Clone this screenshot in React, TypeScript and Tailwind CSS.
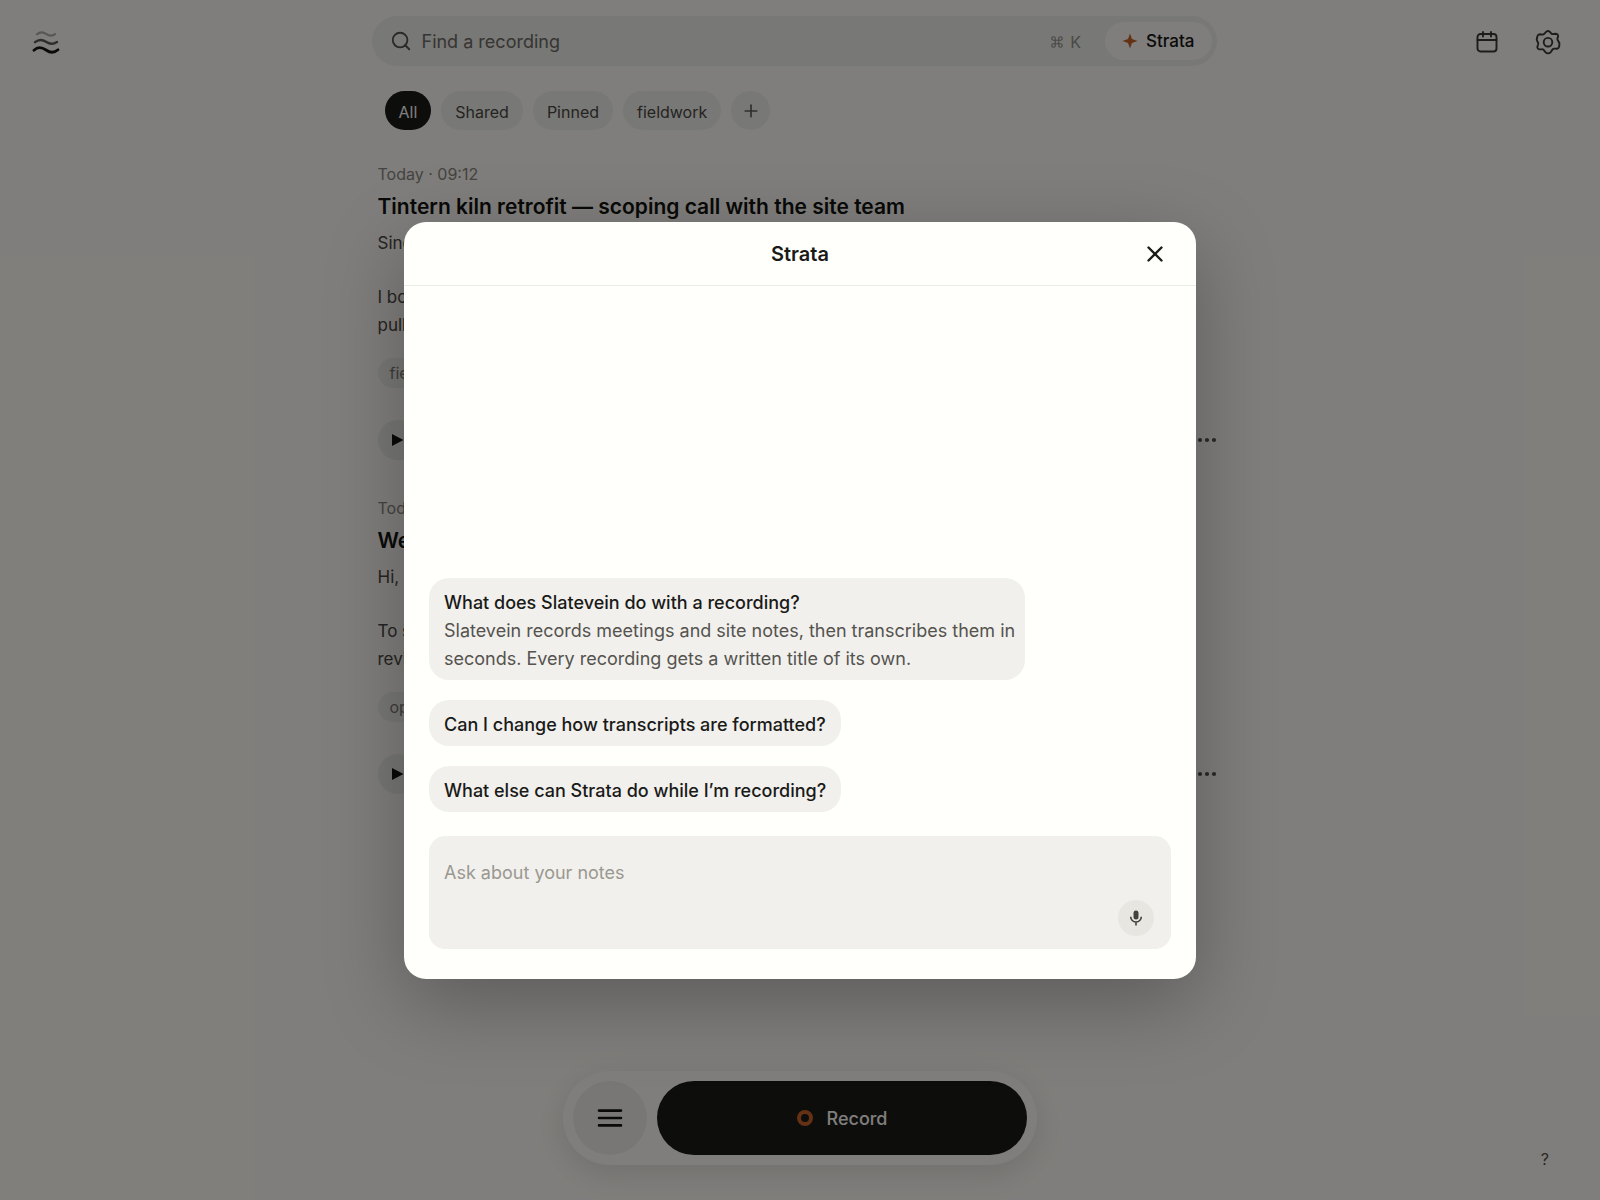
import { Command, Plus, Search, X } from "lucide-react";

const filters = [
    { key: 1, title: "All" },
    { key: 2, title: "Shared" },
    { key: 3, title: "Pinned" },
    { key: 4, title: "fieldwork" },
];

const recordings = [
    {
        key: 1,
        time: "Today · 09:12",
        title: "Tintern kiln retrofit — scoping call with the site team",
        intro: "Sinc",
        lines: ["I bo", "pull"],
        tag: "fie",
    },
    { key: 2, time: "Tod", title: "We", intro: "Hi,", lines: ["To s", "revi"], tag: "op" },
];

const suggestions = [
    {
        key: 1,
        title: "What does Slatevein do with a recording?",
        desc: "Slatevein records meetings and site notes, then transcribes them in seconds. Every recording gets a written title of its own.",
    },
    { key: 2, title: "Can I change how transcripts are formatted?" },
    { key: 3, title: "What else can Strata do while I’m recording?" },
];

function LogoIcon() {
    return (
        <svg width="28" height="24" viewBox="0 0 28 24" fill="none" strokeLinecap="round" className="stroke-[#141412]">
            <path d="M5 4.2C8 1.5 11 1.8 14 3.8S20 6.6 23 4.2" strokeWidth="2.2" opacity=".35" />
            <path d="M3 12.2C7 8.8 10.5 9.4 14 11.8S21 14.8 25 12" strokeWidth="2.4" opacity=".7" />
            <path d="M2 20.2C6 16.4 10 17.2 14 20S22 23.3 26 19.8" strokeWidth="2.8" />
        </svg>
    );
}

function CalendarIcon() {
    return (
        <svg width="24" height="24" viewBox="0 0 24 24" fill="none" stroke="currentColor" strokeWidth="1.9" strokeLinecap="round">
            <rect x="2.5" y="4" width="19" height="17.5" rx="3" />
            <path d="M2.5 10h19M8 2v4.5M16 2v4.5" />
        </svg>
    );
}

function GearIcon() {
    return (
        <svg width="26" height="26" viewBox="0 0 26 26" fill="none" stroke="currentColor" strokeWidth="1.9" strokeLinejoin="round">
            <path d="M11.4 2.6Q13 1.2 14.6 2.6L16.4 4.6Q17.4 5.3 18.6 5L21 4.700Q23 5 23.200 7L22.400 9.700Q22.200 10.600 23 11.500L24.400 14.200 24.200 17.500Q23.700 19.400 22 19.800L19.400 19.600Q18.400 19.500 17.600 20.400L16 22.800Q13 26 10.200 22.800L8.600 20.800Q7.800 20 6.800 20.200L4.200 20.400Q2.300 19.900 2.300 18L3.200 15.200Q3.400 14.200 2.800 13.300L1.700 10.600 2.400 7.200Q3 5.400 4.900 5.300L7.400 5.600Q8.600 5.500 9.400 4.600Z" />
            <circle cx="13" cy="13.2" r="4.3" />
        </svg>
    );
}

function SparkIcon() {
    return (
        <svg width="16" height="16" viewBox="0 0 16 16" className="fill-[#c9622a]">
            <path d="M8 0.5 10 6 15.5 8 10 10 8 15.5 6 10 0.5 8 6 6Z" />
        </svg>
    );
}

function MenuIcon() {
    return (
        <svg width="26" height="20" viewBox="0 0 26 20" fill="none" stroke="currentColor" strokeWidth="2.6" strokeLinecap="round">
            <path d="M2 2.6h22M2 10h22M2 17.4h22" />
        </svg>
    );
}

function MicIcon() {
    return (
        <svg width="16" height="16" viewBox="0 0 16 16" fill="none" className="stroke-[#44423d]">
            <rect x="5.5" y="0.5" width="5" height="9" rx="2.5" className="fill-[#44423d]" stroke="none" />
            <path d="M2.7 6.8a5.3 5.3 0 0 0 10.6 0M8 12.2V15.5" strokeWidth="1.6" />
        </svg>
    );
}

function Recording({ item }: { item: (typeof recordings)[number] }) {
    return (
        <article className="flex flex-col pl-1.5">
            <time className="text-base leading-6 text-[#8a8882]">{item.time}</time>
            <h2 className="mt-[5px] text-[21px] leading-8 font-semibold text-[#12120f]">{item.title}</h2>
            <p className="mt-1.5 text-[17px] leading-7 text-[#4a4844]">{item.intro}</p>
            <p className="mt-[26px] flex flex-col text-[17px] leading-7 text-[#4a4844]">
                {item.lines.map((line) => (
                    <span key={line}>{line}</span>
                ))}
            </p>
            <span className="mt-[19px] self-start rounded-full bg-[#f1f0ec] px-3 text-base leading-[30px] text-[#7d7b75]">{item.tag}</span>
            <section className="mt-8 flex items-center justify-between">
                <button aria-label="Play" className="flex size-10 items-center justify-center rounded-full bg-[#efeeea]">
                    <svg width="12" height="12" viewBox="0 0 12 12" className="fill-[#141412]">
                        <path d="M0 0 11.5 6 0 12Z" />
                    </svg>
                </button>
                <button aria-label="More">
                    <svg width="20" height="6" viewBox="0 0 20 6" className="fill-[#55534e]">
                        <circle cx="3" cy="3" r="2.1" />
                        <circle cx="10" cy="3" r="2.1" />
                        <circle cx="17" cy="3" r="2.1" />
                    </svg>
                </button>
            </section>
        </article>
    );
}

function StrataDialog() {
    return (
        <section
            role="dialog"
            aria-label="Strata"
            className="flex w-full max-w-[792px] flex-col overflow-hidden rounded-[22px] bg-[#fffffc] shadow-[0_24px_80px_rgba(0,0,0,0.27)]"
        >
            <header className="grid grid-cols-[1fr_auto_1fr] items-center border-b border-[#ebebe8] px-7 pt-4 pb-[15px]">
                <h1 className="col-start-2 text-xl leading-8 font-semibold text-[#1a1a18]">Strata</h1>
                <button aria-label="Close" className="justify-self-end text-[#1a1a18]">
                    <X size={26} strokeWidth={2.2} />
                </button>
            </header>
            <section className="flex flex-col gap-6 px-[25px] pt-[292px] pb-[30px]">
                <section className="flex flex-col items-start gap-5">
                    {suggestions.map((item) => (
                        <button
                            key={item.key}
                            className="max-w-[596px] rounded-[20px] bg-[#f1f0ed] px-[15px] pt-[11px] pb-[7px] text-left text-lg leading-7"
                        >
                            <span className="block font-medium text-[#1a1a18]">{item.title}</span>
                            {item.desc && <span className="-mr-2 block text-[#55534e]">{item.desc}</span>}
                        </button>
                    ))}
                </section>
                <section className="flex h-[113px] rounded-2xl bg-[#f1f0ed] pt-[23px] pr-[17px] pb-[13px] pl-[15px]">
                    <textarea
                        aria-label="Ask about your notes"
                        placeholder="Ask about your notes"
                        className="flex-1 resize-none text-lg leading-7 outline-none placeholder:text-[#9a9890]"
                    />
                    <button aria-label="Dictate" className="flex size-9 items-center justify-center self-end rounded-full bg-[#e8e6e0]">
                        <MicIcon />
                    </button>
                </section>
            </section>
        </section>
    );
}

export default function App() {
    return (
        <div className="relative flex min-h-screen flex-col bg-[#fffdf8] font-['Inter',sans-serif]">
            <header className="grid grid-cols-[1fr_minmax(0,845px)_1fr] items-center pt-4 pr-3">
                <a href="#" aria-label="Home" className="justify-self-start pt-0.5 pl-8">
                    <LogoIcon />
                </a>
                <section className="flex h-[50px] items-center rounded-full bg-[#f0f0ec] pr-[5px] pl-[18px]">
                    <Search size={22} className="text-[#55534e]" />
                    <input
                        type="search"
                        aria-label="Find a recording"
                        placeholder="Find a recording"
                        className="ml-2.5 min-w-0 flex-1 pt-0.5 text-lg outline-none placeholder:text-[#6d6b66]"
                    />
                    <span className="mr-6 flex items-center gap-1.5 pt-0.5 text-base text-[#94928c]">
                        <Command size={14} />K
                    </span>
                    <button className="flex h-[38px] items-center gap-2 rounded-full bg-[#fffdf8] px-[17px] text-[17px] font-medium text-[#141412]">
                        <SparkIcon />
                        <span className="pt-0.5">Strata</span>
                    </button>
                </section>
                <nav className="flex gap-9 justify-self-end pt-0.5 pr-[27px] text-[#3a3834]">
                    <button aria-label="Calendar">
                        <CalendarIcon />
                    </button>
                    <button aria-label="Settings">
                        <GearIcon />
                    </button>
                </nav>
            </header>

            <main className="flex justify-center pr-3">
                <section className="w-full max-w-[845px]">
                    <nav className="mt-[25px] flex gap-2.5 pl-[13px]">
                        {filters.map((item, ind) => (
                            <button
                                key={item.key}
                                className={`h-[39px] rounded-full px-3.5 pt-0.5 text-base ${
                                    ind === 0 ? "bg-[#1a1a17] text-[#fffdf8]" : "bg-[#f1f0ec] text-[#4a4844]"
                                }`}
                            >
                                {item.title}
                            </button>
                        ))}
                        <button aria-label="Add filter" className="flex size-[39px] items-center justify-center rounded-full bg-[#f1f0ec] text-[#5f5d58]">
                            <Plus size={20} strokeWidth={2} />
                        </button>
                    </nav>
                    <section className="mt-8 flex flex-col gap-9">
                        {recordings.map((item) => (
                            <Recording item={item} key={item.key} />
                        ))}
                    </section>
                </section>
            </main>

            <footer className="mt-auto grid grid-cols-[1fr_auto_1fr] items-end pb-[35px]">
                <section className="col-start-2 flex gap-2.5 rounded-full bg-[#fffdf8] p-2.5 shadow-[0_8px_32px_rgba(0,0,0,0.12)]">
                    <button aria-label="Menu" className="flex size-[74px] items-center justify-center rounded-full bg-[#f0efeb] text-[#141412]">
                        <MenuIcon />
                    </button>
                    <button className="flex w-[370px] items-center justify-center gap-3.5 rounded-full bg-[#1a1a17] text-lg font-medium text-[#fffdf8]">
                        <span className="size-4 rounded-full border-4 border-[#c9622a]" />
                        <span className="pt-0.5">Record</span>
                    </button>
                </section>
                <a href="#" className="justify-self-end pr-[51px] text-base leading-3 text-[#55534e]">
                    ?
                </a>
            </footer>

            <section className="absolute inset-0 flex items-center justify-center bg-black/50">
                <StrataDialog />
            </section>
        </div>
    );
}
